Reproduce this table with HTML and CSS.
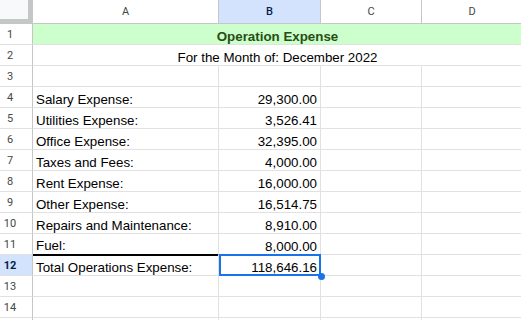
FILE: index.html
```html
<!DOCTYPE html>
<html>
<head>
<meta charset="utf-8">
<link rel="stylesheet" href="styles.css">
</head>
<body>
<div class="sheet">
  <div class="corner"></div>
  <div class="ch">A</div><div class="ch ch-sel">B</div><div class="ch">C</div><div class="ch">D</div>

  <div class="rh">1</div><div class="cell merged title">Operation Expense</div>
  <div class="rh">2</div><div class="cell merged">For the Month of: December 2022</div>
  <div class="rh">3</div><div class="cell"></div><div class="cell"></div><div class="cell"></div><div class="cell"></div>

  <div class="rh">4</div><div class="cell">Salary Expense:</div><div class="cell num">29,300.00</div><div class="cell"></div><div class="cell"></div>
  <div class="rh">5</div><div class="cell">Utilities Expense:</div><div class="cell num">3,526.41</div><div class="cell"></div><div class="cell"></div>
  <div class="rh">6</div><div class="cell">Office Expense:</div><div class="cell num">32,395.00</div><div class="cell"></div><div class="cell"></div>
  <div class="rh">7</div><div class="cell">Taxes and Fees:</div><div class="cell num">4,000.00</div><div class="cell"></div><div class="cell"></div>
  <div class="rh">8</div><div class="cell">Rent Expense:</div><div class="cell num">16,000.00</div><div class="cell"></div><div class="cell"></div>
  <div class="rh">9</div><div class="cell">Other Expense:</div><div class="cell num">16,514.75</div><div class="cell"></div><div class="cell"></div>
  <div class="rh">10</div><div class="cell">Repairs and Maintenance:</div><div class="cell num">8,910.00</div><div class="cell"></div><div class="cell"></div>
  <div class="rh">11</div><div class="cell underline">Fuel:</div><div class="cell num">8,000.00</div><div class="cell"></div><div class="cell"></div>
  <div class="rh rh-sel">12</div><div class="cell">Total Operations Expense:</div><div class="cell num selected">118,646.16<span class="handle"></span></div><div class="cell"></div><div class="cell"></div>
  <div class="rh">13</div><div class="cell"></div><div class="cell"></div><div class="cell"></div><div class="cell"></div>
  <div class="rh">14</div><div class="cell"></div><div class="cell"></div><div class="cell"></div><div class="cell"></div>
  <div class="rh"></div><div class="cell"></div><div class="cell"></div><div class="cell"></div><div class="cell"></div>
</div>
</body>
</html>
```

FILE: styles.css
```css
html, body {
  margin: 0;
  padding: 0;
  background: #ffffff;
  overflow: hidden;
}

.sheet {
  display: grid;
  grid-template-columns: 33px 186px 102px 101px 101px;
  grid-template-rows: 24px;
  grid-auto-rows: 21px;
  width: 523px;
  font-family: "Liberation Sans", Arial, sans-serif;
  font-size: 13.33px;
  color: #000000;
}

.sheet > div {
  box-sizing: border-box;
}

.corner {
  background: #f8f9fa;
  border-right: 5px solid #c4c7c5;
  border-bottom: 5px solid #c4c7c5;
}

.ch {
  display: flex;
  align-items: center;
  justify-content: center;
  font-family: Roboto, "Liberation Sans", sans-serif;
  font-size: 11px;
  color: #444746;
  background: #ffffff;
  border-right: 1px solid #c4c7c5;
  border-bottom: 1px solid #c4c7c5;
}

.ch-sel {
  background: #d3e3fd;
  color: #041e49;
  font-weight: 500;
}

.rh {
  display: flex;
  align-items: center;
  justify-content: center;
  padding-right: 12px;
  font-family: Roboto, "Liberation Sans", sans-serif;
  font-size: 11px;
  color: #444746;
  background: #ffffff;
  border-right: 1px solid #c4c7c5;
  border-bottom: 1px solid #e1e1e1;
}

.rh-sel {
  background: #d3e3fd;
  color: #041e49;
  font-weight: 700;
}

.cell {
  display: flex;
  align-items: flex-end;
  padding: 0 3px;
  line-height: 14px;
  white-space: nowrap;
  border-right: 1px solid #e1e1e1;
  border-bottom: 1px solid #e1e1e1;
  position: relative;
}

.merged {
  grid-column: span 4;
  justify-content: center;
}

.title {
  background: #ccffcc;
  color: #274e13;
  font-weight: 700;
}

.num {
  justify-content: flex-end;
}

.underline {
  border-bottom: 2px solid #000000;
  margin-bottom: -1px;
  height: 22px;
  align-self: start;
  padding-bottom: 1px;
}

.selected::after {
  content: "";
  position: absolute;
  left: 0;
  right: -1px;
  top: -1px;
  bottom: -1px;
  border: 2px solid #1a73e8;
  pointer-events: none;
}

.handle {
  position: absolute;
  right: -5px;
  bottom: -5px;
  width: 7px;
  height: 7px;
  border-radius: 50%;
  background: #1a73e8;
  z-index: 2;
}
```
